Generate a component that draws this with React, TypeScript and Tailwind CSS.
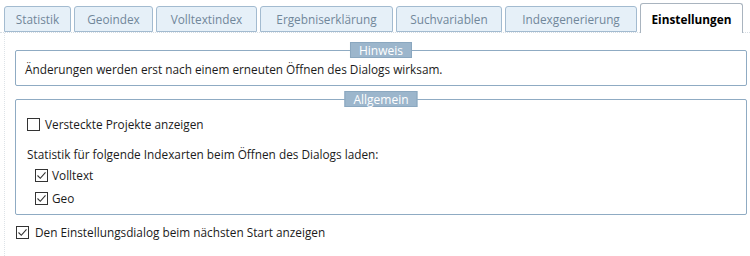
import React from "react";

const tabs = [
  { label: "Statistik", w: 67 },
  { label: "Geoindex", w: 79 },
  { label: "Volltextindex", w: 101 },
  { label: "Ergebniserklärung", w: 133 },
  { label: "Suchvariablen", w: 106 },
  { label: "Indexgenerierung", w: 132 },
];

const Check = ({ checked }: { checked?: boolean }) => (
  <svg width="13" height="13" viewBox="0 0 13 13" className="shrink-0">
    <rect x="0.5" y="0.5" width="12" height="12" fill="#fff" stroke="#333" />
    {checked && <path d="M2.5 6.5l2.8 2.8 5.2-6" fill="none" stroke="#333" strokeWidth="1.1" />}
  </svg>
);

const Legend = ({ text }: { text: string }) => (
  <div className="absolute left-1/2 -translate-x-1/2 -top-[9px] px-[8px] h-[16px] leading-[15px] bg-[#9cb6cc] border border-[#8aa7bf] text-white text-[12px]">
    {text}
  </div>
);

export default function App() {
  return (
    <div className="w-[750px] h-[256px] bg-white text-[#1b1b1b] text-[11.8px] leading-[16px] font-['Open_Sans','Noto_Sans',sans-serif] overflow-hidden">
      {/* Tabs */}
      <div className="flex items-end gap-[3px] pl-[4px] h-[33px] border-b border-dotted border-[#d6dde4]">
        {tabs.map(t => (
          <div
            key={t.label}
            style={{ width: t.w }}
            className="h-[26px] flex items-center justify-center bg-[#e6f0f8] border border-[#a3bbd0] rounded-t-[3px] text-[#71879a]"
          >
            {t.label}
          </div>
        ))}
        <div className="w-[103px] h-[30px] -mb-[1px] flex items-center justify-center bg-white border border-b-0 border-[#a9b4bf] rounded-t-[3px] font-bold text-black">
          Einstellungen
        </div>
      </div>

      {/* Panel */}
      <div className="ml-[4px] border-l border-dotted border-[#dde3e8] h-[223px] pt-[17px] pl-[10px] pr-[3px]">
        <div className="relative h-[36px] border border-[#8fabc3] rounded-[2px] flex items-center pl-[9px] pt-[1px]">
          <Legend text="Hinweis" />
          Änderungen werden erst nach einem erneuten Öffnen des Dialogs wirksam.
        </div>

        <div className="relative mt-[13px] h-[116px] border border-[#8fabc3] rounded-[2px] pl-[11px] pt-[16px]">
          <Legend text="Allgemein" />
          <div className="flex items-center gap-[5px]">
            <Check />
            <span>Versteckte Projekte anzeigen</span>
          </div>
          <div className="mt-[14px]">Statistik für folgende Indexarten beim Öffnen des Dialogs laden:</div>
          <div className="flex flex-col gap-[7px] mt-[5px] pl-[8px]">
            <div className="flex items-center gap-[4px]">
              <Check checked />
              <span>Volltext</span>
            </div>
            <div className="flex items-center gap-[4px]">
              <Check checked />
              <span>Geo</span>
            </div>
          </div>
        </div>

        <div className="flex items-center gap-[6px] mt-[9px] pl-[1px]">
          <Check checked />
          <span>Den Einstellungsdialog beim nächsten Start anzeigen</span>
        </div>
      </div>
    </div>
  );
}
